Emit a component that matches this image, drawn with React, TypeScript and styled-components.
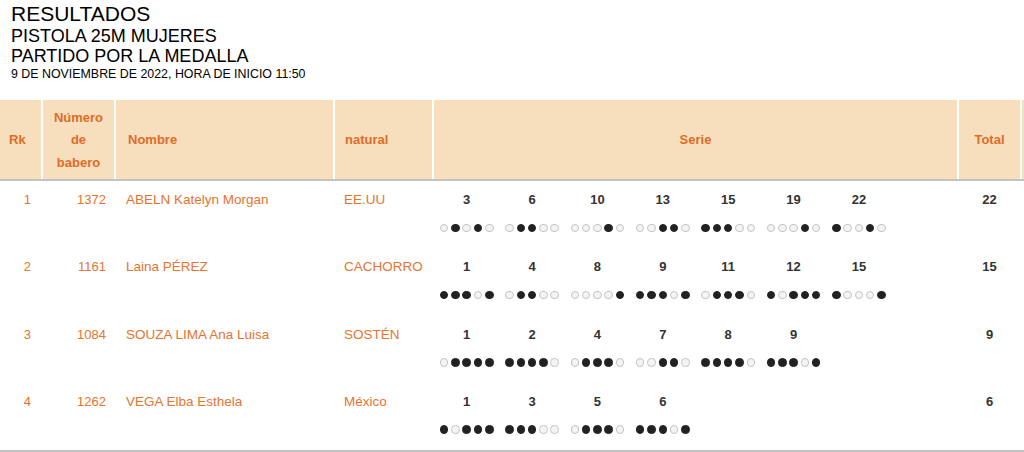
import React from "react";
import styled, { createGlobalStyle } from "styled-components";

const GlobalStyle = createGlobalStyle`
  html, body {
    margin: 0;
    padding: 0;
    background: #fff;
    overflow: hidden;
  }
  body {
    font-family: "Liberation Sans", Arial, Helvetica, sans-serif;
  }
`;

const COLUMNS = "41px 71px 217px 97px 523px 61px 1fr";

type Shot = 0 | 1;

interface Athlete {
  rank: number;
  bib: number;
  name: string;
  nation: string;
  series: { score: number; shots: Shot[] }[];
  total: number;
}

const athletes: Athlete[] = [
  {
    rank: 1,
    bib: 1372,
    name: "ABELN Katelyn Morgan",
    nation: "EE.UU",
    total: 22,
    series: [
      { score: 3, shots: [0, 1, 0, 1, 0] },
      { score: 6, shots: [0, 1, 1, 0, 0] },
      { score: 10, shots: [0, 0, 0, 1, 0] },
      { score: 13, shots: [0, 0, 1, 1, 0] },
      { score: 15, shots: [1, 1, 1, 0, 0] },
      { score: 19, shots: [0, 0, 0, 1, 0] },
      { score: 22, shots: [1, 0, 0, 1, 0] },
    ],
  },
  {
    rank: 2,
    bib: 1161,
    name: "Laina PÉREZ",
    nation: "CACHORRO",
    total: 15,
    series: [
      { score: 1, shots: [1, 1, 1, 0, 1] },
      { score: 4, shots: [0, 1, 1, 0, 0] },
      { score: 8, shots: [0, 0, 0, 0, 1] },
      { score: 9, shots: [1, 1, 1, 0, 1] },
      { score: 11, shots: [0, 1, 1, 1, 0] },
      { score: 12, shots: [1, 0, 1, 1, 1] },
      { score: 15, shots: [1, 0, 0, 0, 1] },
    ],
  },
  {
    rank: 3,
    bib: 1084,
    name: "SOUZA LIMA Ana Luisa",
    nation: "SOSTÉN",
    total: 9,
    series: [
      { score: 1, shots: [0, 1, 1, 1, 1] },
      { score: 2, shots: [1, 1, 1, 1, 0] },
      { score: 4, shots: [0, 1, 1, 1, 0] },
      { score: 7, shots: [0, 0, 1, 1, 0] },
      { score: 8, shots: [1, 1, 1, 1, 0] },
      { score: 9, shots: [1, 1, 1, 0, 1] },
    ],
  },
  {
    rank: 4,
    bib: 1262,
    name: "VEGA Elba Esthela",
    nation: "México",
    total: 6,
    series: [
      { score: 1, shots: [1, 0, 1, 1, 1] },
      { score: 3, shots: [1, 1, 1, 0, 0] },
      { score: 5, shots: [0, 1, 1, 1, 0] },
      { score: 6, shots: [1, 1, 1, 0, 1] },
    ],
  },
];

const Page = styled.div`
  width: 1024px;
`;

const TitleBlock = styled.div`
  box-sizing: border-box;
  height: 100px;
  padding: 2px 11px 0;
  color: #000;
`;

const MainTitle = styled.h1`
  margin: 0;
  font-size: 21px;
  font-weight: normal;
  line-height: 24px;
`;

const SubTitle = styled.h2`
  margin: 0;
  font-size: 18px;
  font-weight: normal;
  line-height: 20px;
`;

const DateLine = styled.p`
  margin: 1px 0 0;
  font-size: 12.4px;
  line-height: 15px;
`;

const HeaderRow = styled.div`
  display: grid;
  grid-template-columns: ${COLUMNS};
  column-gap: 2px;
  border-bottom: 2px solid #c2c2c2;
`;

const HeaderCell = styled.div<{ $align?: "left" | "center"; $pad?: number }>`
  box-sizing: border-box;
  min-height: 79px;
  padding: 2px ${(p) => p.$pad ?? 0}px 0;
  background: #f7dfbe;
  color: #e06c27;
  font-size: 13px;
  font-weight: bold;
  line-height: 22.5px;
  display: flex;
  align-items: center;
  justify-content: ${(p) => (p.$align === "left" ? "flex-start" : "center")};
  text-align: ${(p) => p.$align ?? "center"};
`;

const Body = styled.div`
  border-bottom: 2px solid #c2c2c2;
`;

const Row = styled.div`
  box-sizing: border-box;
  height: 67.25px;
  padding-top: 10px;
  display: grid;
  grid-template-columns: ${COLUMNS};
  column-gap: 2px;
`;

const Cell = styled.div<{ $align?: "left" | "right" | "center"; $pad?: number; $size?: number }>`
  color: #e5742f;
  font-size: ${(p) => p.$size ?? 13}px;
  line-height: 18px;
  text-align: ${(p) => p.$align ?? "left"};
  padding: 0 ${(p) => p.$pad ?? 0}px;
`;

const TotalCell = styled.div`
  color: #333;
  font-size: 13px;
  font-weight: bold;
  line-height: 18px;
  text-align: center;
`;

const SeriesGrid = styled.div`
  display: grid;
  grid-template-columns: repeat(8, 1fr);
`;

const SeriesItem = styled.div`
  display: flex;
  flex-direction: column;
  align-items: center;
`;

const SeriesScore = styled.span`
  color: #333;
  font-size: 13px;
  font-weight: bold;
  line-height: 18px;
`;

const Shots = styled.div`
  margin-top: 14.5px;
  display: flex;
  gap: 2.8px;
`;

const ShotDot = styled.span<{ $hit: boolean }>`
  box-sizing: border-box;
  width: 8.5px;
  height: 8.5px;
  border-radius: 50%;
  background: ${(p) => (p.$hit ? "#222" : "#f4f4f4")};
  border: 1px solid ${(p) => (p.$hit ? "#222" : "#c4c4c4")};
`;

export default function App() {
  return (
    <Page>
      <GlobalStyle />
      <TitleBlock>
        <MainTitle>RESULTADOS</MainTitle>
        <SubTitle>PISTOLA 25M MUJERES</SubTitle>
        <SubTitle>PARTIDO POR LA MEDALLA</SubTitle>
        <DateLine>9 DE NOVIEMBRE DE 2022, HORA DE INICIO 11:50</DateLine>
      </TitleBlock>
      <HeaderRow>
        <HeaderCell $align="left" $pad={9}>
          Rk
        </HeaderCell>
        <HeaderCell>
          Número
          <br />
          de
          <br />
          babero
        </HeaderCell>
        <HeaderCell $align="left" $pad={12}>
          Nombre
        </HeaderCell>
        <HeaderCell $align="left" $pad={10}>
          natural
        </HeaderCell>
        <HeaderCell>Serie</HeaderCell>
        <HeaderCell>Total</HeaderCell>
        <HeaderCell />
      </HeaderRow>
      <Body>
        {athletes.map((a) => (
          <Row key={a.bib}>
            <Cell $align="right" $pad={10}>
              {a.rank}
            </Cell>
            <Cell $align="right" $pad={8}>
              {a.bib}
            </Cell>
            <Cell $pad={10} $size={13.5}>
              {a.name}
            </Cell>
            <Cell $pad={9} $size={13.5}>
              {a.nation}
            </Cell>
            <SeriesGrid>
              {a.series.map((s, i) => (
                <SeriesItem key={i}>
                  <SeriesScore>{s.score}</SeriesScore>
                  <Shots>
                    {s.shots.map((hit, j) => (
                      <ShotDot key={j} $hit={hit === 1} />
                    ))}
                  </Shots>
                </SeriesItem>
              ))}
            </SeriesGrid>
            <TotalCell>{a.total}</TotalCell>
            <div />
          </Row>
        ))}
      </Body>
    </Page>
  );
}
